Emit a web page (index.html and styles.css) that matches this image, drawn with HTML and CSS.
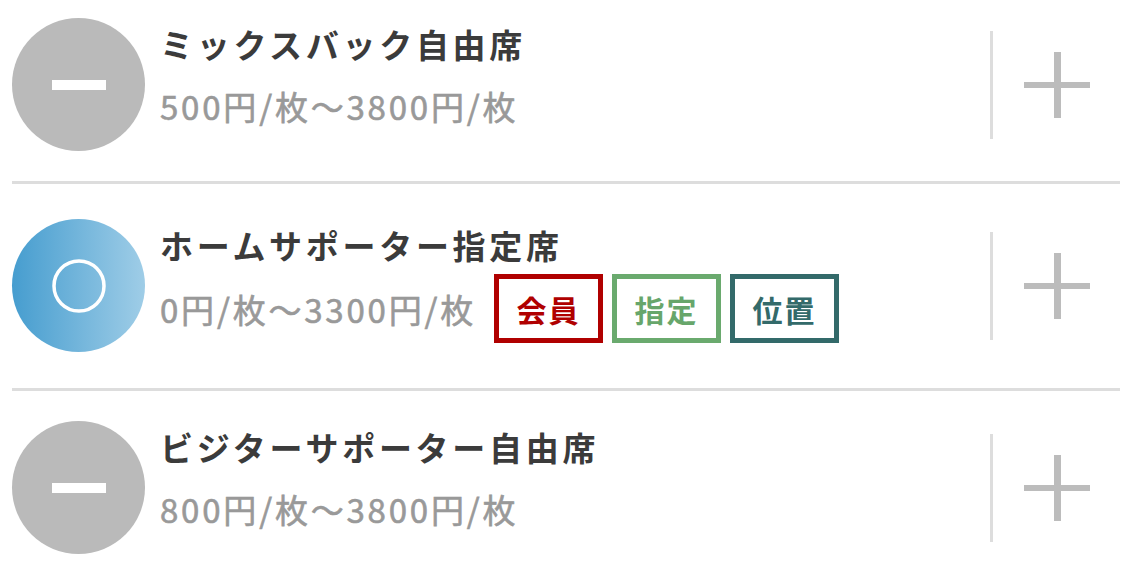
FILE: index.html
```html
<!DOCTYPE html>
<html lang="ja">
<head>
    <meta charset="UTF-8">
    <meta name="viewport" content="width=device-width, initial-scale=1.0">
    <title>席種選択</title>
    <link rel="stylesheet" href="styles.css">
</head>
<body>
    <ul class="seat-list">
        <li class="seat-row seat-row-first">
            <div class="seat-toggle">
                <svg width="54" height="10" viewBox="0 0 54 10"><rect x="0" y="0" width="54" height="10" fill="#fff"/></svg>
            </div>
            <div class="seat-info">
                <div class="seat-name">ミックスバック自由席</div>
                <div class="seat-price-line">
                    <span class="seat-price">500円/枚〜3800円/枚</span>
                </div>
            </div>
            <div class="seat-add">
                <svg width="66" height="66" viewBox="0 0 66 66"><rect x="0" y="30" width="66" height="6" fill="#bcbcbc"/><rect x="30" y="0" width="7" height="66" fill="#bcbcbc"/></svg>
            </div>
        </li>
        <li class="seat-row seat-row-tags">
            <div class="seat-toggle seat-toggle-on">
                <svg width="60" height="60" viewBox="0 0 60 60"><circle cx="30" cy="30" r="25" fill="none" stroke="#fff" stroke-width="3.5"/></svg>
            </div>
            <div class="seat-info">
                <div class="seat-name">ホームサポーター指定席</div>
                <div class="seat-price-line seat-price-line-tags">
                    <span class="seat-price">0円/枚〜3300円/枚</span>
                    <span class="tag tag-member">会員</span>
                    <span class="tag tag-reserved">指定</span>
                    <span class="tag tag-position">位置</span>
                </div>
            </div>
            <div class="seat-add">
                <svg width="66" height="66" viewBox="0 0 66 66"><rect x="0" y="30" width="66" height="6" fill="#bcbcbc"/><rect x="30" y="0" width="7" height="66" fill="#bcbcbc"/></svg>
            </div>
        </li>
        <li class="seat-row">
            <div class="seat-toggle">
                <svg width="54" height="10" viewBox="0 0 54 10"><rect x="0" y="0" width="54" height="10" fill="#fff"/></svg>
            </div>
            <div class="seat-info">
                <div class="seat-name">ビジターサポーター自由席</div>
                <div class="seat-price-line">
                    <span class="seat-price">800円/枚〜3800円/枚</span>
                </div>
            </div>
            <div class="seat-add">
                <svg width="66" height="66" viewBox="0 0 66 66"><rect x="0" y="30" width="66" height="6" fill="#bcbcbc"/><rect x="30" y="0" width="7" height="66" fill="#bcbcbc"/></svg>
            </div>
        </li>
    </ul>
</body>
</html>
```

FILE: styles.css
```css
body {
    margin: 0;
    background-color: #fff;
    font-family: "Noto Sans CJK JP", "Noto Sans", sans-serif;
}

.seat-list {
    list-style: none;
    margin: 0;
    padding: 0 3px 0 12px;
}

.seat-row {
    display: flex;
    align-items: center;
    padding: 30px 0;
    border-bottom: 3px solid #dddddd;
}

.seat-row:last-child {
    border-bottom: none;
}

.seat-row-first {
    padding-top: 18px;
}

.seat-row-tags {
    padding: 35px 0 36px;
}

/* round toggle on the left */
.seat-toggle {
    flex: none;
    width: 133px;
    height: 133px;
    border-radius: 50%;
    background-color: #bababa;
    display: flex;
    align-items: center;
    justify-content: center;
}

.seat-toggle-on {
    background: linear-gradient(to right, #469dcf, #9fcde7);
}

.seat-info {
    flex: 1;
    align-self: flex-start;
    margin-left: 15px;
    padding-top: 4px;
}

.seat-name {
    font-size: 33px;
    font-weight: bold;
    letter-spacing: 3.7px;
    line-height: 44px;
    color: #3b3b3b;
}

.seat-price-line {
    display: flex;
    align-items: center;
    margin-top: 20px;
}

.seat-price-line-tags {
    margin-top: 7px;
}

.seat-price {
    font-size: 33px;
    letter-spacing: 2.8px;
    line-height: 40px;
    color: #999999;
    -webkit-text-stroke: 0.6px #999999;
}

/* tags */
.tag {
    box-sizing: border-box;
    height: 69px;
    width: 109px;
    display: flex;
    align-items: center;
    justify-content: center;
    border: 5px solid;
    font-size: 30px;
    font-weight: bold;
    letter-spacing: 2px;
    margin-left: 9px;
}

.tag-member {
    margin-left: 18px;
    color: #b00000;
    border-color: #b00000;
}

.tag-reserved {
    color: #67a66b;
    border-color: #6aaa6e;
}

.tag-position {
    color: #336a6a;
    border-color: #336a6a;
}

/* add button on the right */
.seat-add {
    flex: none;
    align-self: center;
    width: 127px;
    height: 108px;
    border-left: 3px solid #dddddd;
    display: flex;
    align-items: center;
    justify-content: center;
}
```
